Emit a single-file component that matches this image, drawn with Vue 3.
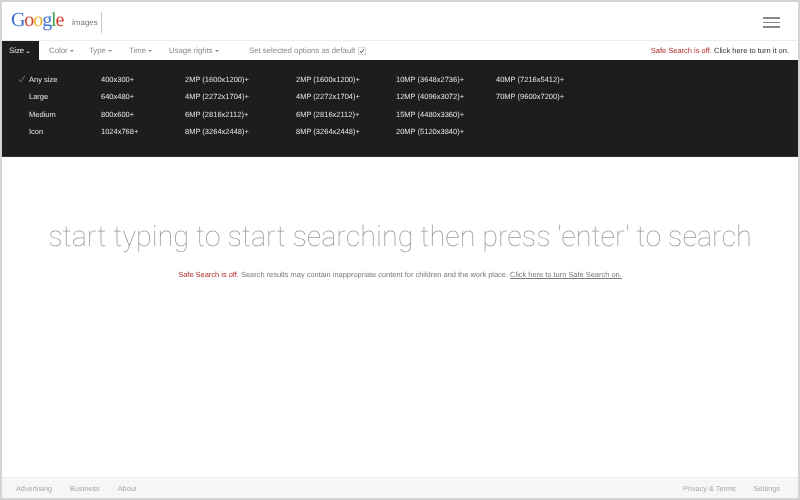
<script setup>
const leftLinks = ['Advertising', 'Business', 'About']
const rightLinks = ['Privacy & Terms', 'Settings']
const logo = [
  ['G', '#3b6fd8'], ['o', '#d9442f'], ['o', '#eeb32a'], ['g', '#3b6fd8'], ['l', '#3fa14a'], ['e', '#d9442f']
]
const filters = ['Color', 'Type', 'Time', 'Usage rights']
const columns = [
  { cls: 'c1', items: ['Any size', 'Large', 'Medium', 'Icon'] },
  { cls: 'c2', items: ['400x300+', '640x480+', '800x600+', '1024x768+'] },
  { cls: 'c3', items: ['2MP (1600x1200)+', '4MP (2272x1704)+', '6MP (2816x2112)+', '8MP (3264x2448)+'] },
  { cls: 'c4', items: ['2MP (1600x1200)+', '4MP (2272x1704)+', '6MP (2816x2112)+', '8MP (3264x2448)+'] },
  { cls: 'c5', items: ['10MP (3648x2736)+', '12MP (4096x3072)+', '15MP (4480x3360)+', '20MP (5120x3840)+'] },
  { cls: 'c6', items: ['40MP (7216x5412)+', '70MP (9600x7200)+'] }
]
</script>

<template>
  <div class="frame">
    <header class="top">
      <div class="logo"><span v-for="(l, i) in logo" :key="i" :style="{ color: l[1] }">{{ l[0] }}</span></div>
      <span class="images">images</span>
      <span class="divider"></span>
      <span class="spacer"></span>
      <div class="burger"><i></i><i></i><i></i></div>
    </header>
    <nav class="tools">
      <div class="tab">Size<b class="up"></b></div>
      <div v-for="f in filters" :key="f" class="filter">{{ f }}<b class="down"></b></div>
      <div class="default">Set selected options as default</div>
      <span class="box">
        <svg width="6" height="6" viewBox="0 0 6 6"><path d="M1 3 L2.4 4.8 L5 1" fill="none" stroke="#555" stroke-width="1" /></svg>
      </span>
      <span class="spacer"></span>
      <div class="safe"><em>Safe Search is off.</em> Click here to turn it on.</div>
    </nav>
    <section class="panel">
      <div v-for="c in columns" :key="c.cls" class="col" :class="c.cls">
        <div v-for="(t, i) in c.items" :key="t" class="opt">
          <svg v-if="c.cls === 'c1' && i === 0" class="check" width="8" height="8" viewBox="0 0 8 8"><path d="M0.8 4.6 L2.6 7 L7 0.6" fill="none" stroke="#8a8a8a" stroke-width="0.8" /></svg>
          {{ t }}
        </div>
      </div>
    </section>
    <main class="main">
      <h1>start typing to start searching then press 'enter' to search</h1>
      <p><em>Safe Search is off.</em> Search results may contain inappropriate content for children and the work place. <u>Click here to turn Safe Search on.</u></p>
    </main>
    <footer class="foot">
      <a v-for="l in leftLinks" :key="l">{{ l }}</a>
      <span class="spacer"></span>
      <a v-for="l in rightLinks" :key="l">{{ l }}</a>
    </footer>
  </div>
</template>

<style>
html, body { margin: 0; background: #fff; }
</style>

<style scoped>
.frame {
  width: 800px; height: 500px; box-sizing: border-box;
  border: 2px solid #d4d4d4;
  display: flex; flex-direction: column;
  font-family: "Liberation Sans", Arial, sans-serif; font-size: 7.5px;
  text-rendering: geometricPrecision;
  background: #fff; overflow: hidden;
  will-change: transform;
}
.spacer { flex: 1; }
.top { height: 39px; box-sizing: border-box; display: flex; align-items: center; padding: 0 18px 0 9px; border-bottom: 1px solid #ececec; flex: none; }
.logo { font-family: "Liberation Serif", serif; font-size: 20px; letter-spacing: -1.1px; width: 61px; margin-top: -2px; }
.images { color: #777; font-size: 8px; margin-top: 3px; }
.divider { width: 1px; height: 21px; background: #c8c8c8; margin-left: 3px; margin-top: 3px; }
.burger { display: flex; flex-direction: column; gap: 3px; margin-top: 3px; }
.burger i { display: block; width: 17px; height: 1.5px; background: #888; }
.tools { height: 19px; display: flex; align-items: center; color: #888; flex: none; padding-right: 9px; font-size: 7.8px; }
.tab { background: #1d1d1d; color: #e8e8e8; height: 100%; width: 37px; display: flex; align-items: center; padding-left: 7px; box-sizing: border-box; }
.filter { width: 40px; display: flex; align-items: center; }
.tab + .filter { margin-left: 10px; }
.filter:nth-child(5) { width: 80px; }
.up, .down { width: 0; height: 0; margin-left: 2px; border-left: 2.2px solid transparent; border-right: 2.2px solid transparent; }
.up { border-bottom: 2.2px solid #999; margin-top: 2px; }
.down { border-top: 2.2px solid #888; }
.box { width: 6px; height: 6px; border: 1px solid #ddd; margin-left: 3px; display: flex; }
.box svg { flex: none; }
.safe { color: #333; font-size: 7.5px; }
em { color: #b02a2a; font-style: normal; }
.panel { height: 97px; flex: none; background: #1d1d1d; color: #e4e4e4; display: flex; padding-top: 10.5px; box-sizing: border-box; border-bottom: 1px solid #333; }
.col { display: flex; flex-direction: column; }
.opt { height: 17.5px; line-height: 17.5px; white-space: nowrap; position: relative; }
.check { position: absolute; left: -11px; top: 4px; }
.c1 { margin-left: 27px; width: 72px; }
.c2 { width: 84px; }
.c3 { width: 111px; }
.c4 { width: 100px; }
.c5 { width: 100px; }
.main { flex: 1; text-align: center; color: #777; }
h1 { margin: 59px 0 0; font-family: Roboto, sans-serif; font-weight: 100; font-size: 28.75px; line-height: 42px; color: #999; white-space: nowrap; }
p { margin: 12px 0 0; font-size: 7.45px; }
.foot { height: 20px; flex: none; background: #f6f6f6; border-top: 1px solid #eee; display: flex; align-items: center; color: #a8a8a8; padding: 0 18px 0 14px; gap: 18px; font-size: 7.3px; }
</style>
